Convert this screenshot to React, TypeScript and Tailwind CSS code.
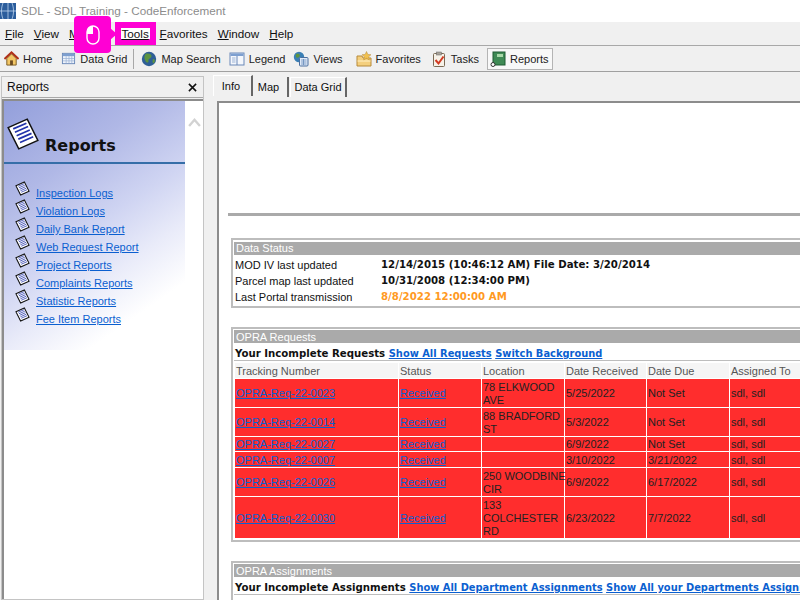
import type { ReactNode } from "react";

const ui = "font-['Liberation_Sans',sans-serif]";
const bold = "font-['DejaVu_Sans',sans-serif] font-bold text-[10.2px]";
const link = "text-[#0b5fd0] underline";
const boldLink = "text-[#0b5fd0] underline text-[9.9px]";

const menus = ["File", "View", "Maps", "Tools", "Favorites", "Window", "Help"];

const reportLinks = [
  "Inspection Logs",
  "Violation Logs",
  "Daily Bank Report",
  "Web Request Report",
  "Project Reports",
  "Complaints Reports",
  "Statistic Reports",
  "Fee Item Reports",
];

const rows = [
  { id: "OPRA-Req-22-0023", loc: "78 ELKWOOD\nAVE", rec: "5/25/2022", due: "Not Set", h: "h-[28px]" },
  { id: "OPRA-Req-22-0014", loc: "88 BRADFORD\nST", rec: "5/3/2022", due: "Not Set", h: "h-[28px]" },
  { id: "OPRA-Req-22-0027", loc: "", rec: "6/9/2022", due: "Not Set", h: "h-[14px]" },
  { id: "OPRA-Req-22-0007", loc: "", rec: "3/10/2022", due: "3/21/2022", h: "h-[15px]" },
  { id: "OPRA-Req-22-0026", loc: "250 WOODBINE\nCIR", rec: "6/9/2022", due: "6/17/2022", h: "h-[28px]" },
  { id: "OPRA-Req-22-0030", loc: "133\nCOLCHESTER\nRD", rec: "6/23/2022", due: "7/7/2022", h: "h-[41px]" },
];

function DocIcon({ big = false }: { big?: boolean }) {
  return (
    <svg viewBox="0 0 16 16" className={big ? "w-[34px] h-[34px] shrink-0" : "w-[15px] h-[15px] shrink-0"}>
      <path d="M1 5 L10 1 L15 11 L6 15 Z" fill="#fff" stroke="#111" strokeWidth={big ? 0.7 : 1.1} />
      <path d="M3.4 5.6 L9.6 2.9 M4.2 7.2 L10.4 4.5 M5 8.8 L11.2 6.1 M5.8 10.4 L12 7.7 M6.6 12 L12.8 9.3" stroke="#2233aa" strokeWidth="0.8" />
    </svg>
  );
}

function HomeIcon() {
  return (
    <svg viewBox="0 0 16 16" className="w-[15px] h-[15px]">
      <path d="M3 8 V15 H13 V8 L8 3 Z" fill="#f3c766" stroke="#7a5a20" />
      <path d="M0.5 8.5 L8 1.5 L15.5 8.5" fill="none" stroke="#b03018" strokeWidth="2" />
      <rect x="6.5" y="10" width="3" height="5" fill="#6b4a20" />
    </svg>
  );
}

function GridIcon() {
  return (
    <svg viewBox="0 0 16 16" className="w-[15px] h-[15px]">
      <rect x="1.5" y="2.5" width="13" height="11" fill="#eef3fb" stroke="#6a88b8" />
      <rect x="2" y="3" width="12" height="2.5" fill="#7d9fd0" />
      <path d="M2 8 H14 M2 10.5 H14 M5.5 5.5 V13 M8.5 5.5 V13 M11.5 5.5 V13" stroke="#9db4d6" strokeWidth="0.8" />
    </svg>
  );
}

function GlobeIcon() {
  return (
    <svg viewBox="0 0 16 16" className="w-[16px] h-[16px]">
      <circle cx="8" cy="8" r="7.2" fill="#2f5f96" />
      <path d="M5 2.5 C8 2 11 3 10.5 5.5 C10 8 7 7 7.5 10 C7.8 12 5.5 12 4.5 10 C3.5 8 2.5 5 5 2.5 Z" fill="#5d9440" />
      <path d="M12 8 C14 8 14.5 10 13 12 C11.5 13 11 10 12 8 Z" fill="#5d9440" />
    </svg>
  );
}

function LegendIcon() {
  return (
    <svg viewBox="0 0 16 16" className="w-[16px] h-[16px]">
      <rect x="1" y="2" width="14" height="12" fill="#f4f7fc" stroke="#6a88b8" />
      <rect x="1.5" y="2.5" width="13" height="2.5" fill="#7d9fd0" />
      <path d="M8 5 V14" stroke="#6a88b8" />
      <path d="M3 7 H6.5 M3 9 H6.5 M3 11 H6.5" stroke="#9db4d6" />
    </svg>
  );
}

function ViewsIcon() {
  return (
    <svg viewBox="0 0 16 16" className="w-[16px] h-[16px]">
      <circle cx="6" cy="6" r="5.2" fill="#3a7fb5" />
      <path d="M3 3 C6 2 8 4 6 6 C4 8 2 6 3 3 Z" fill="#5d9440" />
      <rect x="6.5" y="6.5" width="8.5" height="8.5" rx="1" fill="#dfeaf8" stroke="#4a6f9f" />
      <path d="M8 9 H13.5 M8 11 H13.5 M8 13 H13.5 M10.5 8 V14" stroke="#5b82b4" strokeWidth="0.7" />
    </svg>
  );
}

function FavoritesIcon() {
  return (
    <svg viewBox="0 0 16 16" className="w-[16px] h-[16px]">
      <path d="M1 5 H6 L7 7 H15 V15 H1 Z" fill="#f4cf7d" stroke="#b78a3a" />
      <path d="M1.5 10 H14.5" stroke="#fff1c8" />
      <path d="M10.5 0.5 L11.8 3.4 L15 3.7 L12.6 5.8 L13.3 9 L10.5 7.3 L7.7 9 L8.4 5.8 L6 3.7 L9.2 3.4 Z" fill="#f2c14e" stroke="#b78a3a" strokeWidth="0.5" />
    </svg>
  );
}

function TasksIcon() {
  return (
    <svg viewBox="0 0 16 16" className="w-[16px] h-[16px]">
      <rect x="2.5" y="2.5" width="11" height="13" rx="1" fill="#f7f2e8" stroke="#7b6a55" />
      <rect x="5.5" y="1" width="5" height="3" fill="#a9a39a" stroke="#666" strokeWidth="0.5" />
      <path d="M4.5 9 L7.5 12.5 L12.5 5.5" fill="none" stroke="#d23a22" strokeWidth="2" />
    </svg>
  );
}

function ReportsIcon() {
  return (
    <svg viewBox="0 0 16 16" className="w-[16px] h-[16px]">
      <rect x="3" y="1" width="12" height="13" fill="#3f8a55" stroke="#1f5a32" />
      <rect x="7" y="3" width="6" height="3" fill="#a8d8a8" />
      <circle cx="3" cy="13.5" r="2" fill="#fff" stroke="#333" />
    </svg>
  );
}

function ToolItem({ icon, label, className = "" }: { icon: ReactNode; label: string; className?: string }) {
  return (
    <div className={"flex items-center gap-[4px] h-[22px] whitespace-nowrap " + className}>
      {icon}
      <span className="mt-px">{label}</span>
    </div>
  );
}

function BoxHead({ children, low = false }: { children: ReactNode; low?: boolean }) {
  return (
    <div className={"h-[13px] bg-[#aaaaaa] text-white text-[11px] pl-[2px] whitespace-nowrap " + (low ? "leading-[15px]" : "leading-[13px]")}>
      {children}
    </div>
  );
}

export default function App() {
  return (
    <div className={"relative w-[800px] h-[600px] overflow-hidden bg-[#f0f0f0] text-[11px] text-[#111] flex flex-col " + ui}>
      {/* title bar */}
      <div className="h-[22px] bg-white flex items-center shrink-0">
        <svg viewBox="0 0 16 16" className="w-[16px] h-[18px] shrink-0">
          <rect width="16" height="16" fill="#2b5d9c" />
          <path d="M0 8 H16 M8 0 V16 M3 0 C1 5 1 11 3 16 M12 0 C14 5 14 11 12 16" stroke="#bcd3ee" strokeWidth="0.8" fill="none" />
        </svg>
        <span className="ml-[5px] text-[11.7px] text-[#8c8c8c]">SDL - SDL Training - CodeEnforcement</span>
      </div>

      {/* menu bar */}
      <div className="h-[24px] shrink-0 flex items-center gap-[10px] pl-[5px] border-b border-[#a8a8a8] text-[11.7px]">
        {menus.map((m) =>
          m === "Tools" ? (
            <span key={m} className="w-[41px] h-[23px] ml-[7px] -mr-[6px] border-[6px] border-[#ff00d4] bg-white flex items-center justify-center underline decoration-1 underline-offset-1">
              {m}
            </span>
          ) : (
            <span key={m}>
              <span className="underline decoration-1 underline-offset-1">{m[0]}</span>
              {m.slice(1)}
            </span>
          )
        )}
      </div>

      {/* toolbar */}
      <div className="h-[26px] shrink-0 flex items-center pl-[4px] border-b border-[#a0a0a0] text-[#222]">
        <ToolItem icon={<HomeIcon />} label="Home" />
        <ToolItem icon={<GridIcon />} label="Data Grid" className="ml-[9px]" />
        <div className="w-px h-[20px] bg-[#a8a8a8] ml-[6px] mr-[7px]" />
        <ToolItem icon={<GlobeIcon />} label="Map Search" />
        <ToolItem icon={<LegendIcon />} label="Legend" className="ml-[8px]" />
        <ToolItem icon={<ViewsIcon />} label="Views" className="ml-[8px]" />
        <ToolItem icon={<FavoritesIcon />} label="Favorites" className="ml-[13px]" />
        <ToolItem icon={<TasksIcon />} label="Tasks" className="ml-[10px]" />
        <ToolItem icon={<ReportsIcon />} label="Reports" className="ml-[8px] w-[66px] px-[2px] border border-[#b4b4b4] bg-[#f8f8f8]" />
      </div>

      <div className="flex-1 min-h-0 flex">
        {/* left panel */}
        <div className="w-[203px] ml-[1px] mt-[4px] shrink-0 flex flex-col border border-[#c4c4c4]">
          <div className="h-[21px] shrink-0 flex items-center justify-between pl-[5px] pr-[6px] border-b border-[#a8a8a8] text-[12px]">
            <span>Reports</span>
            <svg viewBox="0 0 10 10" className="w-[9px] h-[9px]">
              <path d="M1 1 L9 9 M9 1 L1 9" stroke="#111" strokeWidth="1.7" />
            </svg>
          </div>
          <div className="flex-1 min-h-0 flex mt-px border-t-2 border-l-2 border-[#8c8c8c] bg-white">
            <div className="w-[181px] h-[249px] shrink-0 bg-[linear-gradient(145deg,#939fdb_0%,#b0b8e6_28%,#cfd4f2_50%,#e9ebf9_66%,#ffffff_82%)]">
              <div className="h-[63px] flex items-end pl-[2px] pb-[3px] border-b-2 border-[#356ea8]">
                <div className="mb-[8px]"><DocIcon big /></div>
                <span className="ml-[5px] mb-[1px] text-[16px] leading-[24px] font-bold text-[#111] font-['DejaVu_Sans',sans-serif]">Reports</span>
              </div>
              <div className="pt-[17px] pl-[11px] flex flex-col">
                {reportLinks.map((r) => (
                  <div key={r} className="h-[18px] flex items-start gap-[6px] leading-[18px]">
                    <DocIcon />
                    <span className={"mt-[3px] " + link}>{r}</span>
                  </div>
                ))}
              </div>
            </div>
            <div className="flex-1 flex justify-center pt-[17px]">
              <svg viewBox="0 0 14 10" className="w-[13px] h-[9px]">
                <path d="M1 9 L7 2 L13 9" fill="none" stroke="#d2d2d2" strokeWidth="2.6" />
              </svg>
            </div>
          </div>
        </div>

        {/* right side */}
        <div className="flex-1 min-w-0 flex flex-col mt-[3px] pl-[13px] overflow-hidden">
          <div className="h-[26px] shrink-0 flex items-start -ml-[4px]">
            <div className="h-[21px] w-[40px] pr-[3px] flex items-center justify-center border-t border-l border-white border-r-2 border-r-[#666]">Info</div>
            <div className="mt-[2px] h-[20px] w-[36px] pr-[3px] flex items-center justify-center border-r-2 border-[#666]">Map</div>
            <div className="mt-[2px] ml-px h-[20px] w-[57px] flex items-center justify-center border-l border-t border-white border-r-2 border-r-[#666]">Data Grid</div>
          </div>
          <div className="flex-1 min-h-0 border-t-2 border-l-2 border-[#8c8c8c] bg-white overflow-hidden">
            <div className="h-[113px] border-b-[3px] border-[#aaaaaa] ml-[9px]" />
            <div className="pl-[12px] w-[700px]">
              {/* data status */}
              <div className="mt-[22px] border-2 border-[#bdbdbd] border-r-0 h-[70px] pt-[2px] pl-px">
                <BoxHead>Data Status</BoxHead>
                <div className="grid grid-cols-[146px_1fr] leading-[16px] pt-[2px] pl-px">
                  <span>MOD IV last updated</span>
                  <span className={bold}>12/14/2015 (10:46:12 AM) File Date: 3/20/2014</span>
                  <span>Parcel map last updated</span>
                  <span className={bold}>10/31/2008 (12:34:00 PM)</span>
                  <span>Last Portal transmission</span>
                  <span className={bold + " text-[#ff9a1f]"}>8/8/2022 12:00:00 AM</span>
                </div>
              </div>

              {/* opra requests */}
              <div className="mt-[19px] border-2 border-[#bdbdbd] border-r-0 h-[215px] pt-px pl-px">
                <BoxHead low>OPRA Requests</BoxHead>
                <div className={"h-[18px] pl-px leading-[22px] whitespace-nowrap border-b border-[#bdbdbd] " + bold}>
                  Your Incomplete Requests <span className={boldLink}>Show All Requests</span> <span className={boldLink}>Switch Background</span>
                </div>
                <table className="table-fixed border-separate border-spacing-[1px] w-[587px] leading-[13px] mt-px">
                  <colgroup>
                    <col className="w-[163px]" />
                    <col className="w-[82px]" />
                    <col className="w-[82px]" />
                    <col className="w-[81px]" />
                    <col className="w-[82px]" />
                    <col className="w-[90px]" />
                  </colgroup>
                  <thead>
                    <tr className="h-[15px] bg-[#f5f5f5] text-[#555] text-left">
                      {["Tracking Number", "Status", "Location", "Date Received", "Date Due", "Assigned To"].map((h) => (
                        <th key={h} className="font-normal p-0 pt-px pl-px whitespace-nowrap">{h}</th>
                      ))}
                    </tr>
                  </thead>
                  <tbody>
                    {rows.map((r) => (
                      <tr key={r.id} className={"bg-[#ff2d2d] text-[#222] " + r.h}>
                        <td className={"p-0 pt-px pl-px " + link}>{r.id}</td>
                        <td className={"p-0 pt-px pl-px " + link}>Received</td>
                        <td className="p-0 pt-px pl-px whitespace-pre">{r.loc}</td>
                        <td className="p-0 pt-px pl-px">{r.rec}</td>
                        <td className="p-0 pt-px pl-px">{r.due}</td>
                        <td className="p-0 pt-px pl-px">sdl, sdl</td>
                      </tr>
                    ))}
                  </tbody>
                </table>
              </div>

              {/* opra assignments */}
              <div className="mt-[19px] border-2 border-[#bdbdbd] border-r-0 h-[60px] pt-px pl-px">
                <BoxHead low>OPRA Assignments</BoxHead>
                <div className={"h-[18px] pl-px leading-[22px] whitespace-nowrap border-b border-[#bdbdbd] " + bold}>
                  Your Incomplete Assignments <span className={boldLink}>Show All Department Assignments</span> <span className={boldLink}>Show All your Departments Assignments</span>
                </div>
              </div>
            </div>
          </div>
        </div>
      </div>

      {/* mouse click callout */}
      <div className="absolute left-[74px] top-[16px] w-[37px] h-[37px] rounded-[4px] bg-[#ff00d4] flex items-center justify-center">
        <svg viewBox="0 0 14 20" className="w-[14px] h-[20px]">
          <rect x="1" y="1" width="12" height="18" rx="6" fill="none" stroke="#fff" strokeWidth="1.4" />
          <path d="M1 9 H7 V1 C3.5 1 1 3.5 1 7 Z" fill="#fff" />
        </svg>
      </div>
      <div className="absolute left-[110px] top-[28px] w-0 h-0 border-y-[6px] border-y-transparent border-l-[7px] border-l-[#ff00d4]" />
    </div>
  );
}
